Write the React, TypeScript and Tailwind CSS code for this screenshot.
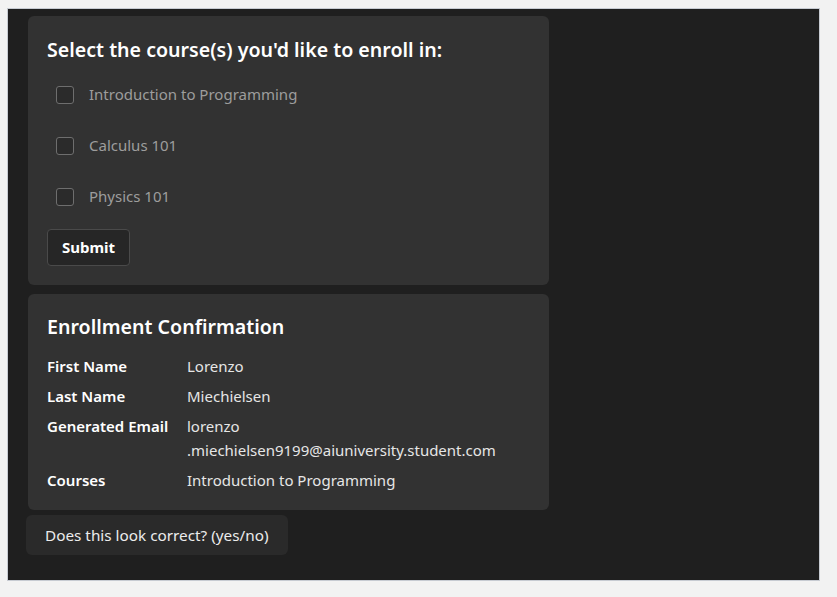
import React from "react";

const courses = ["Introduction to Programming", "Calculus 101", "Physics 101"];

const rows: { label: string; value: React.ReactNode }[] = [
  { label: "First Name", value: "Lorenzo" },
  { label: "Last Name", value: "Miechielsen" },
  {
    label: "Generated Email",
    value: (
      <>
        lorenzo
        <br />
        .miechielsen9199@aiuniversity.student.com
      </>
    ),
  },
  { label: "Courses", value: "Introduction to Programming" },
];

export default function App() {
  return (
    <div
      className="w-[837px] h-[597px] bg-[#f2f2f2] pt-[8px] pl-[7px]"
      style={{ fontFamily: '"Noto Sans", "Open Sans", sans-serif' }}
    >
      <div className="w-[813px] h-[573px] bg-[#1f1f1f] border border-[#c7cbd2] pt-[7px] pl-[18px] flex flex-col items-start">
        {/* Course selection card */}
        <div className="w-[521px] h-[269px] bg-[#323232] rounded-[6px] ml-[2px] px-[19px] pt-[20px]">
          <h2 className="text-white text-[19.6px] font-semibold leading-[28px]">
            Select the course(s) you'd like to enroll in:
          </h2>
          <div className="mt-[5px] flex flex-col">
            {courses.map((c) => (
              <label key={c} className="h-[51px] flex items-center pl-[9px] gap-[15px]">
                <span className="w-[18px] h-[18px] rounded-[3px] border border-[#6e6e6e] bg-[#2b2b2b]" />
                <span className="text-[#9d9d9d] text-[15px]">{c}</span>
              </label>
            ))}
          </div>
          <button className="mt-[7px] w-[83px] h-[37px] rounded-[4px] border border-[#4a4a4a] bg-[#262626] text-white text-[15px] font-bold">
            Submit
          </button>
        </div>

        {/* Confirmation card */}
        <div className="w-[521px] h-[216px] bg-[#323232] rounded-[6px] ml-[2px] mt-[9px] px-[19px] pt-[19px]">
          <h2 className="text-white text-[19.6px] font-semibold leading-[28px]">
            Enrollment Confirmation
          </h2>
          <div className="mt-[13px] grid grid-cols-[140px_1fr] gap-y-[6px] text-[15px] leading-[24px] text-white">
            {rows.map((r) => (
              <React.Fragment key={r.label}>
                <div className="font-semibold">{r.label}</div>
                <div className="text-[#e6e6e6]">{r.value}</div>
              </React.Fragment>
            ))}
          </div>
        </div>

        {/* Question bubble */}
        <div className="mt-[5px] h-[40px] px-[19px] flex items-center bg-[#2a2a2a] rounded-[6px] text-[#ececec] text-[15.3px]">
          Does this look correct? (yes/no)
        </div>
      </div>
    </div>
  );
}
